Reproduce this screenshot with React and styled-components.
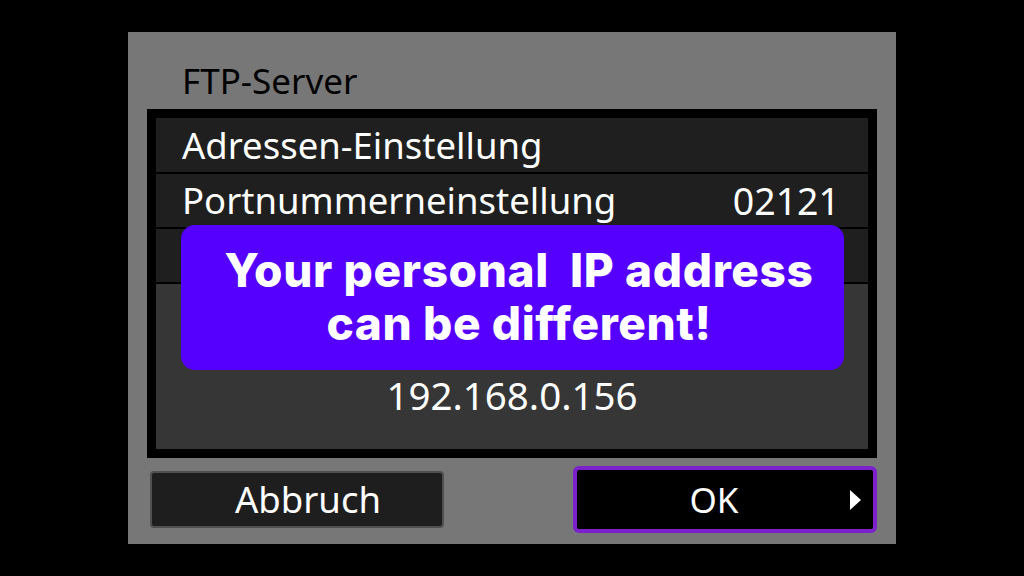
import React from 'react';
import styled, { createGlobalStyle } from 'styled-components';

const GlobalStyle = createGlobalStyle`
    html, body {
        margin: 0;
        padding: 0;
        background: #000;
    }

    body {
        font-family: "Noto Sans", "Open Sans", sans-serif;
    }
`

const rows = [
    { label: 'Adressen-Einstellung', value: '' },
    { label: 'Portnummerneinstellung', value: '02121' },
    { label: '', value: '' },
];

const App = () => {
    return (
        <Page>
            <GlobalStyle />
            <Screen>
                <Title>FTP-Server</Title>

                <Panel>
                    {rows.map((row, i) => (
                        <Row key={i} first={i === 0}>
                            <span>{row.label}</span>
                            <Value>{row.value}</Value>
                        </Row>
                    ))}
                    <Lower>192.168.0.156</Lower>

                    <Notice>
                        <span>Your personal&nbsp; IP address</span>
                        <span>can be different!</span>
                    </Notice>
                </Panel>

                <Buttons>
                    <Button>Abbruch</Button>
                    <Button selected>
                        OK
                        <Arrow />
                    </Button>
                </Buttons>
            </Screen>
        </Page>
    )
}

const Page = styled.div`
    width: 1024px;
    height: 576px;
    display: flex;
    justify-content: center;
    align-items: center;
    background: #000;
`

const Screen = styled.div`
    width: 768px;
    height: 512px;
    box-sizing: border-box;
    padding: 0 19px;
    background: #777777;
    display: flex;
    flex-direction: column;
`

const Title = styled.div`
    height: 77px;
    box-sizing: border-box;
    padding: 27px 0 0 35px;
    font-size: 35px;
    line-height: 44px;
    color: #000;
`

const Panel = styled.div`
    position: relative;
    height: 349px;
    box-sizing: border-box;
    padding: 9px;
    background: #000;
    display: flex;
    flex-direction: column;
    gap: 2px;
`

const Row = styled.div`
    height: ${props => props.first ? '54px' : '53px'};
    flex-shrink: 0;
    display: flex;
    justify-content: space-between;
    align-items: center;
    padding: 0 28px 0 26px;
    background: #1f1f1f;
    color: #fff;
    font-size: 36.5px;
    line-height: 1;
`

const Value = styled.span`
    font-size: 37.5px;
`

const Lower = styled.div`
    flex: 1;
    display: flex;
    justify-content: center;
    align-items: flex-end;
    padding-bottom: 35px;
    background: #363636;
    color: #fff;
    font-size: 38.5px;
    line-height: 1;
`

const Notice = styled.div`
    position: absolute;
    left: 34px;
    top: 116px;
    width: 663px;
    height: 145px;
    box-sizing: border-box;
    padding: 0 0 2px 13px;
    border-radius: 14px;
    background: #5500ff;
    display: flex;
    flex-direction: column;
    justify-content: center;
    align-items: center;
    font-family: Inter, "Noto Sans", sans-serif;
    font-weight: 800;
    font-size: 46px;
    letter-spacing: 0.6px;
    line-height: 53px;
    color: #fff;
`

const Buttons = styled.div`
    flex: 1;
    display: flex;
    justify-content: space-between;
    align-items: center;
    padding: 0 0 3px 3px;
`

const Button = styled.div`
    position: relative;
    box-sizing: border-box;
    width: ${props => props.selected ? '304px' : '294px'};
    height: ${props => props.selected ? '67px' : '57px'};
    display: flex;
    justify-content: center;
    align-items: center;
    padding: ${props => props.selected ? '0 22px 0 0' : '0 0 0 22px'};
    border: ${props => props.selected ? '4px solid #7b22cc' : '2px solid #505050'};
    border-radius: ${props => props.selected ? '6px' : '4px'};
    background: ${props => props.selected ? '#000' : '#1e1e1e'};
    color: #fff;
    font-size: ${props => props.selected ? '35px' : '36.5px'};
    line-height: 1;
`

const Arrow = styled.span`
    position: absolute;
    right: 12px;
    top: 50%;
    transform: translateY(-50%);
    width: 0;
    height: 0;
    border-top: 10px solid transparent;
    border-bottom: 10px solid transparent;
    border-left: 11px solid #fff;
`

export default App;
